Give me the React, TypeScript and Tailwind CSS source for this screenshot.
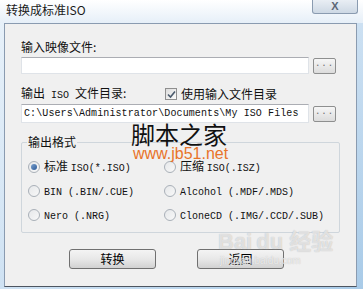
import React from "react";

const cjk = "font-['SimSun','Noto_Sans_CJK_SC',sans-serif]";
const mono = "font-['Liberation_Mono','Noto_Sans_CJK_SC',monospace] text-[10px]";

const BrowseBtn = () => (
    <div className="w-[23px] h-[16px] rounded-[2px] border border-[#8e8f8f] bg-gradient-to-b from-[#f6f6f6] to-[#dcdcdc] flex items-center justify-center">
        <span className="text-[9px] leading-none tracking-[1px] text-[#6b6b6b] font-['Liberation_Mono',monospace] -mt-[2px]">...</span>
    </div>
);

const Radio = ({ checked, children }: { checked?: boolean; children: React.ReactNode }) => (
    <div className="flex items-center gap-[4px] h-[14px]">
        <span className="w-[12px] h-[12px] rounded-full border border-[#a9b0b8] bg-gradient-to-br from-[#e6e8ea] to-[#f8f8f8] flex items-center justify-center">
            {checked && <span className="w-[6px] h-[6px] rounded-full bg-gradient-to-br from-[#7aa0cc] to-[#2d5b9a]" />}
        </span>
        <span className="text-[12px] leading-none text-[#111]">{children}</span>
    </div>
);

const Button = ({ label }: { label: string }) => (
    <div className="w-[87px] h-[20px] rounded-[3px] border border-[#707070] bg-gradient-to-b from-[#f4f4f4] via-[#e8e8e8] to-[#d2d2d2] flex items-center justify-center">
        <span className={`${cjk} text-[12px] leading-none text-black`}>{label}</span>
    </div>
);

export default function App() {
    return (
        <div className="w-[363px] h-[289px] relative overflow-hidden bg-gradient-to-br from-[#e9f2fa] via-[#cfe2f3] to-[#a9cbe8]">
            {/* title bar */}
            <div className="h-[23px] bg-gradient-to-b from-[#ffffff] to-[#e6eff8] flex items-start justify-between">
                <span className="pl-[6px] pt-[2px] text-[12px] text-[#1a1a1a] font-['Noto_Sans_CJK_SC',sans-serif] leading-[16px]">转换成标准ISO</span>
                <div className="mr-[5px] w-[46px] h-[14px] rounded-b-[3px] border border-t-0 border-[#8a9bb0] bg-gradient-to-b from-[#e9eef4] to-[#cdd8e4] flex items-center justify-center">
                    <span className="text-[11px] font-bold leading-none text-[#5b6675] font-['Liberation_Sans',sans-serif]">X</span>
                </div>
            </div>

            {/* client area */}
            <div className={`${cjk} absolute left-[4px] top-[23px] w-[353px] h-[264px] bg-[#f0f0f0] border border-[#8a9bb0] border-b-[#4d5560] flex flex-col pl-[16px]`}>
                <div className="pt-[16px] text-[12px] leading-[14px] text-[#111]">输入映像文件:</div>
                <div className="flex items-center mt-[3px]">
                    <div className="w-[288px] h-[17px] bg-white border border-[#dfe3e8] border-t-[#abadb3]" />
                    <div className="ml-[4px]"><BrowseBtn /></div>
                </div>

                <div className="flex items-center mt-[13px] h-[14px]">
                    <span className="w-[144px] text-[12px] leading-none text-[#111]">输出<span className={`${mono} ml-[6px] mr-[6px]`}>ISO</span>文件目录:</span>
                    <span className="w-[12px] h-[12px] border border-[#8f8f8f] bg-gradient-to-br from-[#dcdcdc] to-[#fbfbfb] flex items-center justify-center">
                        <svg width="9" height="9" viewBox="0 0 9 9"><path d="M1 4.5 L3.5 7 L8 1.5" fill="none" stroke="#4a5a6c" strokeWidth="1.6" /></svg>
                    </span>
                    <span className="ml-[4px] text-[12px] leading-none text-[#111]">使用输入文件目录</span>
                </div>
                <div className="flex items-center mt-[3px]">
                    <div className="w-[288px] h-[19px] bg-white border border-[#dfe3e8] border-t-[#abadb3] flex items-center pl-[2px]">
                        <span className={`${mono} text-[#111] tracking-[0.1px]`}>C:\Users\Administrator\Documents\My ISO Files</span>
                    </div>
                    <div className="ml-[4px]"><BrowseBtn /></div>
                </div>

                {/* group box */}
                <div className="relative mt-[19px] w-[319px] h-[91px] border border-[#cfd6dc] rounded-[2px]">
                    <span className="absolute left-[5px] -top-[8px] bg-[#f0f0f0] px-[1px] text-[12px] leading-[14px] text-[#111]">输出格式</span>
                    <div className="grid grid-cols-[136px_1fr] gap-y-[10px] pl-[6px] pt-[17px]">
                        <Radio checked>标准 <span className={mono}>ISO(*.ISO)</span></Radio>
                        <Radio>压缩 <span className={mono}>ISO(.ISZ)</span></Radio>
                        <Radio><span className={mono}>BIN (.BIN/.CUE)</span></Radio>
                        <Radio><span className={mono}>Alcohol (.MDF/.MDS)</span></Radio>
                        <Radio><span className={mono}>Nero (.NRG)</span></Radio>
                        <Radio><span className={mono}>CloneCD (.IMG/.CCD/.SUB)</span></Radio>
                    </div>
                </div>

                <div className="flex gap-[41px] mt-[16px] pl-[48px]">
                    <Button label="转换" />
                    <Button label="返回" />
                </div>
            </div>

            {/* watermarks */}
            <div className="absolute left-[131px] top-[119px] text-[24px] leading-[30px] text-[#111] font-['Noto_Sans_CJK_SC',sans-serif]">脚本之家</div>
            <div className="absolute left-[133px] top-[145px] text-[16px] leading-[18px] text-[#e8742a] font-['Liberation_Sans',sans-serif]">www.jb51.net</div>
            <div className="absolute left-[218px] top-[228px] text-[22px] font-bold leading-[22px] text-white/60 font-['Liberation_Sans',sans-serif] [text-shadow:0_0_1px_#b0b0b0]">Bai<span className="ml-[4px]">du</span><span className={`ml-[6px] ${cjk}`}>经验</span></div>
            <div className="absolute left-[220px] top-[256px] text-[10px] leading-[10px] text-white/70 font-['Liberation_Sans',sans-serif] [text-shadow:0_0_1px_#b0b0b0]">jingyan.baidu.com</div>
        </div>
    );
}
